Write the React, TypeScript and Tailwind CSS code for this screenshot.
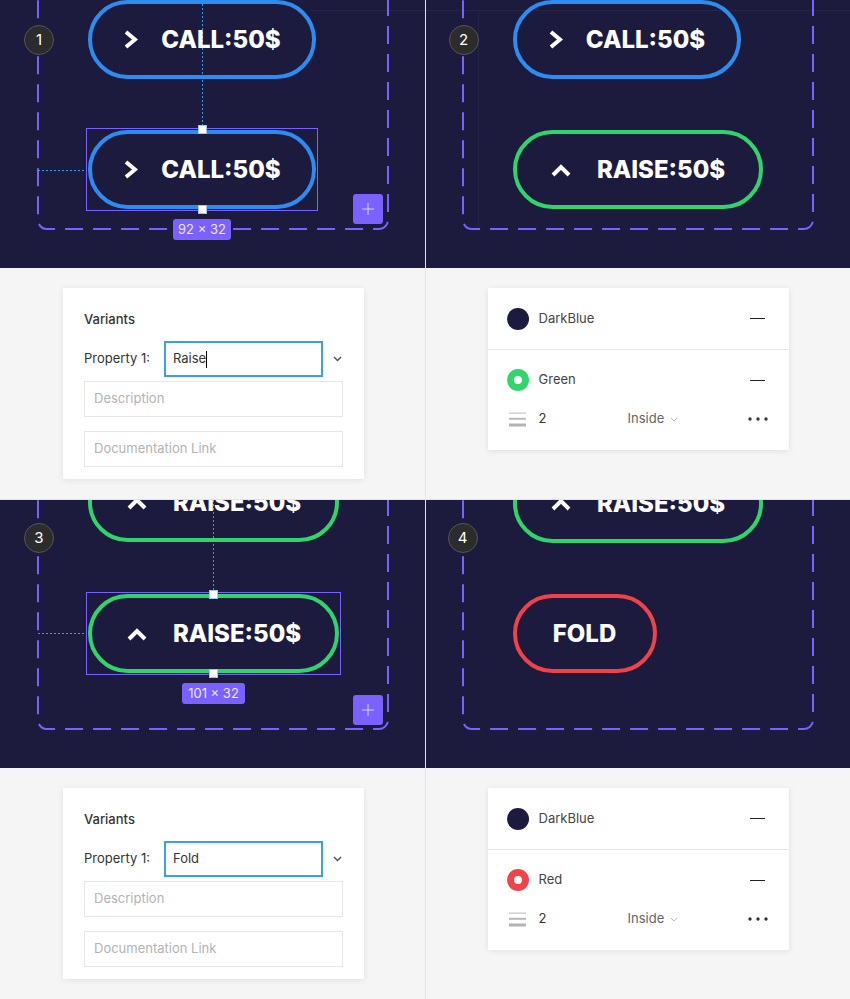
import React from 'react';

type Tone = 'blue' | 'green' | 'red';

const borderTone: Record<Tone, string> = {
  blue: 'border-[#2d8cf0]',
  green: 'border-[#31d36b]',
  red: 'border-[#ef4349]',
};

const ChevronRight = () => (
  <svg width="15" height="21" viewBox="0 0 15 21" fill="none">
    <path d="M3 3l9 7.5L3 18" stroke="white" strokeWidth="4" />
  </svg>
);

const ChevronUp = () => (
  <svg width="22" height="14" viewBox="0 0 22 14" fill="none">
    <path d="M3 12l8-8 8 8" stroke="white" strokeWidth="4" />
  </svg>
);

interface PillProps {
  tone: Tone;
  label: string;
  icon?: 'right' | 'up';
  className: string;
}

// bouton du canvas (CALL / RAISE / FOLD)
const Pill: React.FC<PillProps> = ({ tone, label, icon, className }) => (
  <div
    className={`absolute h-[79px] rounded-full border-4 ${borderTone[tone]} flex items-center justify-center ${
      icon === 'up' ? 'gap-[25px]' : 'gap-[23px]'
    } ${className}`}
  >
    {icon === 'right' && <ChevronRight />}
    {icon === 'up' && <ChevronUp />}
    <span className="font-['Inter'] font-extrabold text-[24px] leading-none text-white">{label}</span>
  </div>
);

const Badge = ({ n, className }: { n: number; className: string }) => (
  <div
    className={`absolute size-[30px] rounded-full bg-[#2c2c2c] border border-[#555] flex items-center justify-center text-white text-[15px] font-['Inter'] ${className}`}
  >
    {n}
  </div>
);

const DashedFrame = ({ className }: { className: string }) => (
  <svg className={`absolute top-[-30px] w-[352px] h-[260px] ${className}`} viewBox="0 0 352 260" fill="none">
    <rect x="1" y="1" width="350" height="258" rx="9" stroke="#7b61ff" strokeWidth="2" strokeDasharray="18 10" />
  </svg>
);

const Handle = ({ className }: { className: string }) => (
  <div className={`absolute size-[9px] bg-white border border-[#9ec9f5] ${className}`} />
);

const Canvas: React.FC<{ children: React.ReactNode }> = ({ children }) => (
  <div className="relative h-[268px] shrink-0 overflow-hidden bg-[#1c1b3d]">{children}</div>
);

const PlusButton = ({ className }: { className: string }) => (
  <div className={`absolute size-[30px] rounded-[3px] bg-[#7b61ff] flex items-center justify-center ${className}`}>
    <svg width="12" height="12" viewBox="0 0 12 12">
      <path d="M6 0v12M0 6h12" stroke="#d9d1ff" strokeWidth="1" />
    </svg>
  </div>
);

const SizeLabel = ({ text, className }: { text: string; className: string }) => (
  <div
    className={`absolute h-[21px] rounded-[3px] bg-[#7b61ff] flex items-center justify-center text-[13px] text-[#ece8ff] font-['Inter'] ${className}`}
  >
    {text}
  </div>
);

// lignes de mesure pointillées bleues
const VDots = ({ className }: { className: string }) => (
  <div
    className={`absolute w-px bg-[repeating-linear-gradient(to_bottom,#2f9bf2_0_2px,transparent_2px_4px)] ${className}`}
  />
);
const HDots = ({ className }: { className: string }) => (
  <div
    className={`absolute h-px bg-[repeating-linear-gradient(to_right,#2f9bf2_0_2px,transparent_2px_4px)] ${className}`}
  />
);

const SmallChevron = ({ className = '' }: { className?: string }) => (
  <svg className={className} width="9" height="6" viewBox="0 0 9 6" fill="none">
    <path d="M1 1l3.5 3.5L8 1" stroke="#555" strokeWidth="1.5" />
  </svg>
);

const VariantsCard = ({ value, caret }: { value: string; caret?: boolean }) => (
  <div className="w-[301px] bg-white shadow-[0_1px_6px_rgba(0,0,0,0.09)] pt-[23px] pb-[12px] px-[21px] font-['Inter'] text-[13px]">
    <div className="leading-4 font-medium text-[#333]">Variants</div>
    <div className="mt-[14px] flex items-center h-9">
      <span className="w-[80px] text-[#333]">Property 1:</span>
      <div className="w-[159px] h-9 border-2 border-[#3ba0e8] flex items-center pl-[7px] text-[#333]">
        {value}
        {caret && <span className="w-px h-[17px] bg-black" />}
      </div>
      <SmallChevron className="ml-[10px]" />
    </div>
    <div className="mt-1 h-9 border border-[#e6e6e6] flex items-center px-[9px] text-[#b3b3b3]">Description</div>
    <div className="mt-[14px] h-9 border border-[#e6e6e6] flex items-center px-[9px] text-[#b3b3b3]">
      Documentation Link
    </div>
  </div>
);

const Minus = () => <div className="w-[15px] h-px bg-[#222]" />;

const StrokeCard = ({ name, ring }: { name: string; ring: string }) => (
  <div className="w-[301px] bg-white shadow-[0_1px_6px_rgba(0,0,0,0.09)] font-['Inter'] text-[13px] text-[#444]">
    <div className="h-[61px] flex items-center pl-[19px] pr-[24px]">
      <div className="size-[22px] rounded-full bg-[#1c1b3d]" />
      <span className="ml-[10px] flex-1">DarkBlue</span>
      <Minus />
    </div>
    <div className="border-t border-[#e6e6e6] pt-[14px] pb-[15px] pl-[19px] pr-[21px]">
      <div className="h-8 flex items-center pr-[3px]">
        <div className={`size-[22px] rounded-full border-[7px] bg-white ${ring}`} />
        <span className="ml-[10px] flex-1">{name}</span>
        <Minus />
      </div>
      <div className="mt-[7px] h-8 flex items-center">
        <div className="w-[22px] flex justify-center">
          <svg width="17" height="15" viewBox="0 0 17 15">
            <rect x="0" y="0.5" width="17" height="1.3" fill="#c9c9c9" />
            <rect x="0" y="5.8" width="17" height="2" fill="#b8b8b8" />
            <rect x="0" y="11.5" width="17" height="3" fill="#b3b3b3" />
          </svg>
        </div>
        <span className="ml-[10px] w-[89px] text-[#333]">2</span>
        <span className="text-[#666]">Inside</span>
        <svg className="ml-[6px]" width="8" height="5" viewBox="0 0 8 5" fill="none">
          <path d="M1 1l3 3 3-3" stroke="#bbb" strokeWidth="1" />
        </svg>
        <div className="flex-1" />
        <svg width="20" height="4" viewBox="0 0 20 4">
          <circle cx="2" cy="2" r="1.7" fill="#333" />
          <circle cx="10" cy="2" r="1.7" fill="#333" />
          <circle cx="18" cy="2" r="1.7" fill="#333" />
        </svg>
      </div>
    </div>
  </div>
);

const PanelArea: React.FC<{ children: React.ReactNode; left: 'l' | 'r' }> = ({ children, left }) => (
  <div className={`flex-1 bg-[#f5f5f5] pt-[20px] ${left === 'l' ? 'pl-[63px]' : 'pl-[62px]'}`}>{children}</div>
);

export default function App() {
  return (
    <div className="w-[850px] h-[999px] grid grid-cols-2 grid-rows-2 gap-px bg-[#e4e4e4] overflow-hidden">
      {/* 1 */}
      <div className="flex flex-col overflow-hidden">
        <Canvas>
          <div className="absolute left-[310px] right-0 top-[10px] h-px bg-[#262548]" />
          <DashedFrame className="left-[37px]" />
          <VDots className="left-[202px] top-0 h-[126px]" />
          <HDots className="left-[38px] w-[48px] top-[170px]" />
          <Pill tone="blue" icon="right" label="CALL:50$" className="left-[88px] top-0 w-[228px] h-[78px]" />
          <Pill tone="blue" icon="right" label="CALL:50$" className="left-[88px] top-[130px] w-[228px]" />
          <div className="absolute left-[86px] top-[128px] w-[232px] h-[83px] border border-[#7b61ff]" />
          <Handle className="left-[198px] top-[125px]" />
          <Handle className="left-[198px] top-[205px]" />
          <SizeLabel text="92 × 32" className="left-[173px] top-[219px] w-[58px]" />
          <PlusButton className="left-[353px] top-[194px]" />
          <Badge n={1} className="left-[24px] top-[25px]" />
        </Canvas>
        <PanelArea left="l">
          <VariantsCard value="Raise" caret />
        </PanelArea>
      </div>

      {/* 2 */}
      <div className="flex flex-col overflow-hidden">
        <Canvas>
          <div className="absolute left-0 right-0 top-[10px] h-px bg-[#262548]" />
          <div className="absolute left-[52px] top-[10px] h-[219px] w-px bg-[#242346]" />
          <DashedFrame className="left-[36px]" />
          <Pill tone="blue" icon="right" label="CALL:50$" className="left-[87px] top-0 w-[228px] h-[78px]" />
          <Pill tone="green" icon="up" label="RAISE:50$" className="left-[87px] top-[130px] w-[250px]" />
          <Badge n={2} className="left-[23px] top-[25px]" />
        </Canvas>
        <PanelArea left="r">
          <StrokeCard name="Green" ring="border-[#33d46b]" />
        </PanelArea>
      </div>

      {/* 3 */}
      <div className="flex flex-col overflow-hidden">
        <Canvas>
          <DashedFrame className="left-[37px]" />
          <VDots className="left-[213px] top-0 h-[90px]" />
          <HDots className="left-[38px] w-[48px] top-[133px]" />
          <Pill tone="green" icon="up" label="RAISE:50$" className="left-[88px] top-[-37px] w-[251px]" />
          <Pill tone="green" icon="up" label="RAISE:50$" className="left-[88px] top-[94px] w-[251px]" />
          <div className="absolute left-[86px] top-[92px] w-[255px] h-[83px] border border-[#7b61ff]" />
          <Handle className="left-[209px] top-[90px]" />
          <Handle className="left-[209px] top-[169px]" />
          <SizeLabel text="101 × 32" className="left-[182px] top-[183px] w-[63px]" />
          <PlusButton className="left-[353px] top-[195px]" />
          <Badge n={3} className="left-[24px] top-[23px]" />
        </Canvas>
        <PanelArea left="l">
          <VariantsCard value="Fold" />
        </PanelArea>
      </div>

      {/* 4 */}
      <div className="flex flex-col overflow-hidden">
        <Canvas>
          <DashedFrame className="left-[36px]" />
          <Pill tone="green" icon="up" label="RAISE:50$" className="left-[87px] top-[-36px] w-[250px]" />
          <Pill tone="red" label="FOLD" className="left-[87px] top-[94px] w-[144px]" />
          <Badge n={4} className="left-[22px] top-[23px]" />
        </Canvas>
        <PanelArea left="r">
          <StrokeCard name="Red" ring="border-[#f0444b]" />
        </PanelArea>
      </div>
    </div>
  );
}
